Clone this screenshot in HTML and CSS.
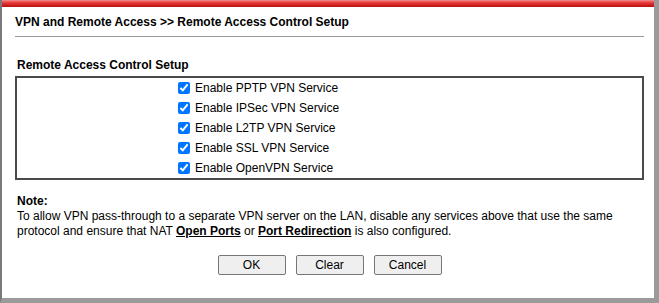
FILE: index.html
```html
<!DOCTYPE html>
<html>
<head>
<meta charset="utf-8">
<link rel="stylesheet" href="styles.css">
</head>
<body>
<div class="frame">
  <div class="topbar"></div>
  <div class="content">
    <div class="title">VPN and Remote Access &gt;&gt; Remote Access Control Setup</div>
    <div class="section-title">Remote Access Control Setup</div>
    <div class="box">
      <label class="row"><input type="checkbox" checked> Enable PPTP VPN Service</label>
      <label class="row"><input type="checkbox" checked> Enable IPSec VPN Service</label>
      <label class="row"><input type="checkbox" checked> Enable L2TP VPN Service</label>
      <label class="row"><input type="checkbox" checked> Enable SSL VPN Service</label>
      <label class="row"><input type="checkbox" checked> Enable OpenVPN Service</label>
    </div>
    <div class="note">
      <div class="note-title">Note:</div>
      <div>To allow VPN pass-through to a separate VPN server on the LAN, disable any services above that use the same protocol and ensure that NAT <a href="#">Open Ports</a> or <a href="#">Port Redirection</a> is also configured.</div>
    </div>
    <div class="buttons">
      <button class="btn">OK</button>
      <button class="btn">Clear</button>
      <button class="btn">Cancel</button>
    </div>
  </div>
</div>
</body>
</html>
```
FILE: styles.css
```css
html, body {
  margin: 0;
  padding: 0;
  background: #fff;
}
body {
  font-family: "Liberation Sans", Arial, sans-serif;
  font-size: 12px;
  color: #000;
}
.frame {
  width: 659px;
  height: 303px;
  box-sizing: border-box;
  border-left: 2px solid #7a7a7a;
  border-right: 5px solid #9a9a9a;
  border-bottom: 5px solid #9a9a9a;
  display: flex;
  flex-direction: column;
  overflow: hidden;
}
.topbar {
  height: 7px;
  flex: none;
  background: linear-gradient(#f29090 0%, #e84040 35%, #d42020 70%, #b01818 100%);
}
.content {
  padding: 0 10px 0 13px;
}
.title {
  font-weight: bold;
  font-size: 12px;
  padding: 8px 0 7px 0;
  border-bottom: 1px solid #999;
}
.section-title {
  font-weight: bold;
  margin: 21px 0 4px 2px;
}
.box {
  border: 2px solid #4a4a4a;
  padding: 0 0 0 160px;
  display: flex;
  flex-direction: column;
}
.row {
  display: flex;
  align-items: center;
  height: 20px;
}
.row input {
  margin: 0 5px 0 1px;
  width: 12px;
  height: 12px;
}
.note {
  margin: 13px 0 0 2px;
  line-height: 15px;
}
.note-title {
  font-weight: bold;
  line-height: 16px;
}
.note a {
  color: #000;
  font-weight: bold;
  text-decoration: underline;
}
.buttons {
  display: flex;
  justify-content: center;
  gap: 10px;
  margin-top: 16px;
}
.btn {
  width: 68px;
  height: 20px;
  font-family: "Liberation Sans", Arial, sans-serif;
  font-size: 12px;
  background: #efefef;
  border: 1px solid #767676;
  border-radius: 2px;
  padding: 0;
}
```
